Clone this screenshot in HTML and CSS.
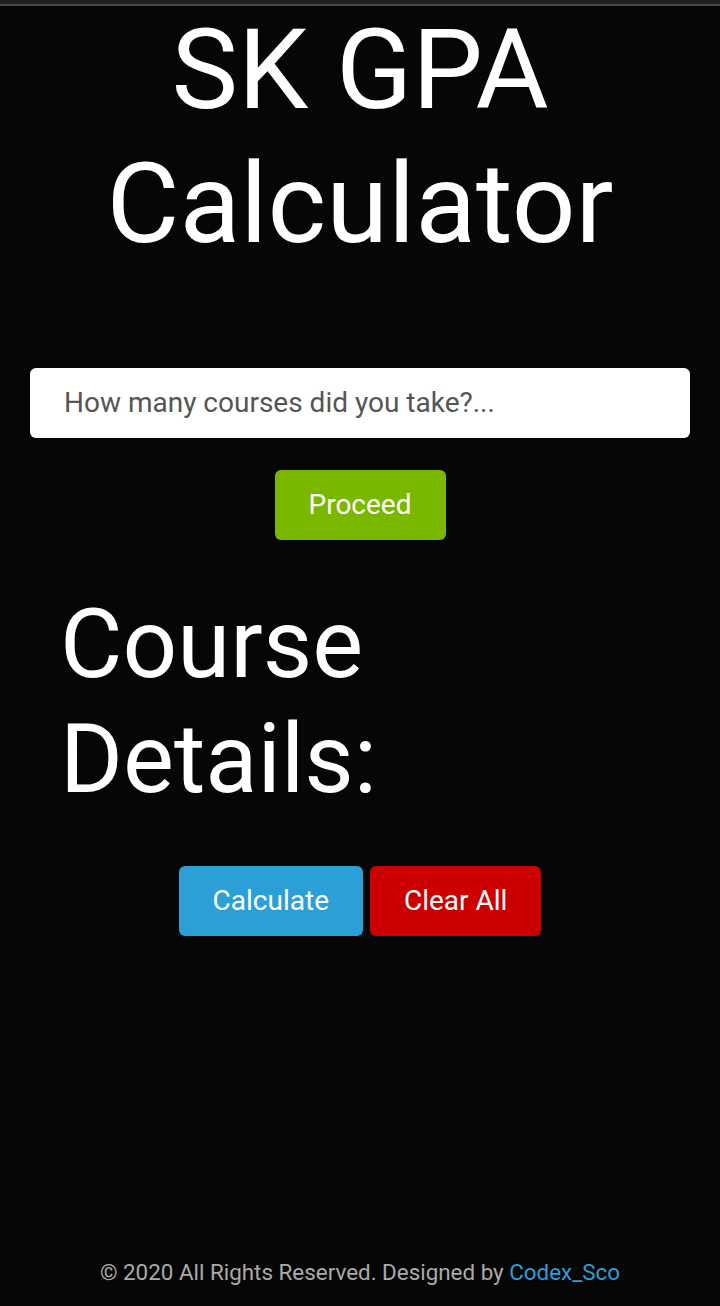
FILE: index.html
```html
<!DOCTYPE html>
<html lang="en">
<head>
<meta charset="utf-8">
<title>SK GPA Calculator</title>
<link rel="stylesheet" href="styles.css">
</head>
<body>
<div class="topbar"></div>
<main class="page">
  <h1 class="title">SK GPA Calculator</h1>
  <form class="course-form">
    <input class="course-input" type="text" placeholder="How many courses did you take?...">
    <div class="row"><button type="button" class="btn btn-green">Proceed</button></div>
  </form>
  <h2 class="details">Course<br>Details:</h2>
  <div class="row actions">
    <button type="button" class="btn btn-blue">Calculate</button>
    <button type="button" class="btn btn-red">Clear All</button>
  </div>
</main>
<footer class="footer">© 2020 All Rights Reserved. Designed by <a href="#" class="link">Codex_Sco</a></footer>
</body>
</html>
```
FILE: styles.css
```css
html, body { margin: 0; padding: 0; }
body {
  background: #060606;
  color: #fff;
  font-family: Roboto, "Noto Sans", sans-serif;
  height: 1306px;
  display: flex;
  flex-direction: column;
}
.topbar {
  height: 4px;
  background: #222;
  border-bottom: 2px solid #4a4a4a;
  flex: none;
}
.page { flex: 1; padding: 0 30px; }
.title {
  margin: -3px 0 0;
  font-size: 112px;
  line-height: 1.2;
  font-weight: 400;
  text-align: center;
}
.course-form { margin-top: 96px; }
.course-input {
  display: block;
  box-sizing: border-box;
  width: 100%;
  height: 70px;
  border: none;
  border-radius: 6px;
  background: #fff;
  padding: 0 34px;
  font-family: Roboto, sans-serif;
  font-size: 28px;
  color: #333;
  outline: none;
}
.course-input::placeholder { color: #555; }
.row { display: flex; justify-content: center; gap: 7px; }
.course-form .row { margin-top: 32px; }
.btn {
  height: 70px;
  border: none;
  border-radius: 6px;
  color: #fff;
  font-family: Roboto, sans-serif;
  font-size: 28px;
  padding: 0 34px 1px;
}
.btn-green { background: #7ab800; }
.btn-blue { background: #2b9fd6; }
.btn-red { background: #cc0000; }
.details {
  margin: 47px 0 0;
  padding-left: 30px;
  font-size: 96px;
  line-height: 1.2;
  font-weight: 400;
}
.actions { margin-top: 49px; }
.footer {
  flex: none;
  text-align: center;
  font-size: 22.4px;
  color: #aaa;
  padding-bottom: 21px;
}
.link { color: #2b9fd6; text-decoration: none; }
```
